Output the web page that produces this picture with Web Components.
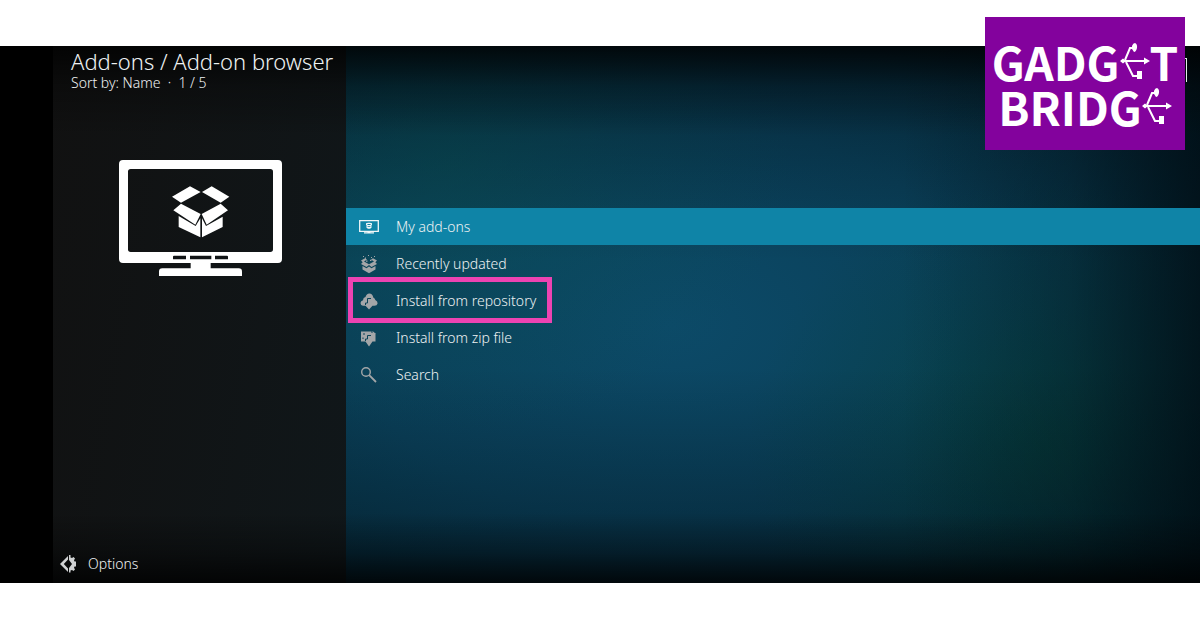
<!DOCTYPE html>
<html lang="en">
<head>
<meta charset="utf-8">
<title>Add-on browser</title>
<style>
body { margin: 0; background: #fff; font-family: "Noto Sans", "Open Sans", sans-serif; font-weight: 300; color: #eef2f3; }
</style>
</head>
<body>
<addon-browser></addon-browser>
<script>
const define = (name, html) => {
  const template = document.createElement('template');
  template.innerHTML = html;
  customElements.define(name, class extends HTMLElement {
    constructor() {
      super();
      this.attachShadow({ mode: 'open' }).append(template.content.cloneNode(true));
    }
  });
};

const BOX = `
  <path d="M186 140 240 109 272 126 213 158ZM276 126 305 109 358 140 332 158ZM213 161 272 192 256 224 190 181ZM332 161 354 181 290 224 275 192ZM206 198 257 228 271 205V262L206 231ZM276 205 288 228 338 200V231L276 262Z"/>`;

const ICONS = {
  tv: `<path fill="none" stroke="currentColor" stroke-width="1.3" d="M.7 3.7H19.3V14.3H.7Z"/><path d="M8.5 14H11.5V15.2H15V16.4H5V15.2H8.5Z"/><path fill-rule="evenodd" d="M7 6.3 9 5.8H11L13 6.3V7.8L12.5 8.2V10.7L11 11.8H9L7.5 10.7V8.2L7 7.8ZM8.4 7.1V8H11.6V7.1ZM8.600 9V9.700H11.400V9Z"/>`,
  box: `<path d="M4 2h1v1H4ZM6 3.5h1v1H6ZM9 1h1v1H9ZM12 3h1v1H12ZM15 2h1v1H15ZM2 6.5 6 4.3 8 5.5 5 7.5 10 10.3 15 7.5 12 5.5 14 4.3 18 6.5 16.3 8.2 18 10 12.5 13 10 11 7.5 13 2 10 3.7 8.2ZM3.5 12 7.5 14.3 10 12.6 12.5 14.3 16.5 12V15.5L10 19.3 3.5 15.5Z"/><path d="M7 6.6h1.5v1.2H7ZM11 5.8h1.5V7H11Z"/>`,
  cloud: `<path d="M6.500 6Q7.500 2.500 10.300 2.500 13.500 2.500 14.300 6.500 16.300 7.500 16.300 9 18.800 10 18.600 12.500 18 14.800 15.500 14.800H13.500L10 18.500 6.500 14.800H4Q1.500 14.500 1.500 12 1.700 9.800 4 9.300 4 6.500 6.500 6Z"/><path fill="none" stroke="#0b4357" d="M6.500 14V12H8.500V7.500H12"/>`,
  zip: `<path d="M2 3.500H12.500V5H16.500V13.500H13.500L10 18.500 6.500 13.500H2Z"/><path d="M13.500 3 16.500 5.500H13.500Z"/><path fill="none" stroke="#0b4357" d="M4 11V9.500M6.500 13V11H8.500V7.500H12M4 6H6"/>`,
  search: `<circle cx="7" cy="7" r="4.300" fill="none" stroke="currentColor" stroke-width="1.400"/><path fill="none" stroke="currentColor" stroke-width="1.800" d="M10.200 10.200 17 17"/>`,
  options: `<path d="M8 2V5.500L3.800 10 8 14.500V18L0 10Z"/><path d="M9 1H10.500V3.500L12 4 13.500 3 15 4.500 14 6.300 14.500 7.500H16V12.500H14.500L14 13.700 15 15.500 13.500 17 12 16 10.500 16.500V18.500H9V14L12 10 9 6Z"/>`
};

customElements.define('ui-icon', class extends HTMLElement {
  constructor() {
    super();
    this.attachShadow({ mode: 'open' });
  }
  connectedCallback() {
    this.shadowRoot.innerHTML = `<style>:host{display:block;flex:none;width:20px;height:20px}svg{display:block}</style>
      <svg width="20" height="20" viewBox="0 0 20 20" fill="currentColor" aria-hidden="true">${ICONS[this.getAttribute('name')]}</svg>`;
  }
});

define('menu-item', `
  <style>
    :host { display: block; --icon: #a3a6a8; }
    :host([selected]) { background: #0f84a7; --icon: #f0f6f8; }
    button { display: flex; align-items: center; width: 100%; height: 37px; padding: 0 13px; border: 0; background: none; color: inherit; font: inherit; font-size: 14px; font-weight: 350; line-height: 20px; text-align: left; }
    .content { position: relative; display: flex; align-items: center; gap: 17px; }
    ::slotted(ui-icon) { color: var(--icon); }
    :host([marked]) .content::after { content: ""; position: absolute; inset: -14px -16px -12px -11px; border: 5px solid #ec43b2; }
  </style>
  <button type="button"><span class="content"><slot name="icon"></slot><slot></slot></span></button>`);

define('addon-art', `
  <style>:host { display: block; } svg { display: block; margin: 0 auto; }</style>
  <svg width="163" height="116" viewBox="27 30 489 348" fill="#fff" role="img" aria-label="Add-ons">
    <path fill-rule="evenodd" d="M39 30H504Q516 30 516 42V327Q516 339 504 339H302V355H386Q396 355 396 365V378H147V365Q147 355 157 355H242V339H39Q27 339 27 327V42Q27 30 39 30ZM62 57Q54 57 54 65V298Q54 306 62 306H481Q489 306 489 298V65Q489 57 481 57ZM192 317Q189 317 189 320V328H228V317ZM240 317V328H304V317ZM315 317V328H354V320Q354 317 351 317Z"/>
    ${BOX}
  </svg>`);

define('side-panel', `
  <style>
    :host { display: flex; flex-direction: column; background: var(--shade), linear-gradient(100deg, #111111, #10171a); }
    header { padding: 2px 0 0 18px; white-space: nowrap; }
    h1 { margin: 0; font-size: 22px; line-height: 26px; font-weight: 300; }
    p { margin: 0; font-size: 14px; font-weight: 350; line-height: 18px; white-space: pre; }
    addon-art { margin: 68px 0 auto 2px; }
    button { display: flex; align-items: center; align-self: start; gap: 8px; padding: 0; margin: 0 0 9px 7px; border: 0; background: none; color: inherit; font: inherit; font-size: 14px; font-weight: 350; line-height: 20px; }
    ui-icon { color: #d0d2d3; }
  </style>
  <header><h1>Add-ons / Add-on browser</h1><p>Sort by: Name  ·  1 / 5</p></header>
  <addon-art></addon-art>
  <button type="button"><ui-icon name="options"></ui-icon>Options</button>`);

const USB = `<svg width="30" height="37" viewBox="0 0 30 37" fill="#fff" stroke="#fff" aria-hidden="true">
  <path fill="none" stroke-width="2" d="M1 18H26M5 17 10 5H14M6 19 13 33H18"/>
  <path stroke="none" d="M24 14.500 30 18 24 21.500ZM12 3Q13 0 15 0 17.500 1 17 5 16 9 14 9L12 6ZM17 28H22V36H17ZM0 18 3 15.500 6 18 3 20.500Z"/></svg>`;

define('brand-logo', `
  <style>
    :host { display: flex; flex-direction: column; align-items: center; justify-content: center; gap: 8px; box-sizing: border-box; width: 200px; height: 133px; background: #83029d; color: #fff; font-family: "Noto Sans CJK SC", "Liberation Sans", sans-serif; font-weight: 700; font-size: 46px; line-height: 37px; }
    div { display: flex; align-items: center; }
    svg { display: block; }
  </style>
  <div><span>GADG</span>${USB}<span>T</span></div>
  <div><span>BRIDG</span>${USB}</div>`);

define('addon-browser', `
  <style>
    :host { display: flex; flex-direction: column; position: relative; box-sizing: border-box; min-height: 100vh; padding: 46px 0 45px; --shade: linear-gradient(rgba(0,0,0,.8), rgba(0,0,0,.3) 40px, transparent 90px, transparent calc(100% - 70px), rgba(0,0,0,.35) calc(100% - 30px), rgba(0,0,0,.8)); }
    main { flex: 1; display: grid; grid-template-columns: 293px 1fr; padding-left: 53px; background: #000; }
    nav { padding-top: 162px; background: var(--shade),
      linear-gradient(90deg, rgba(0,10,16,0) 65%, rgba(0,10,16,.3) 85%, rgba(0,10,16,.75)),
      linear-gradient(rgba(0,10,20,.4), rgba(0,10,20,0) 40%, rgba(0,10,20,0) 60%, rgba(0,10,20,.4)),
      radial-gradient(ellipse 35% 50% at 82% 75%, rgba(5,68,60,.7), rgba(5,68,60,.3) 50%, rgba(5,68,60,0)),
      radial-gradient(ellipse 40% 50% at 12% 22%, rgba(10,80,85,.6), rgba(10,80,85,.25) 50%, rgba(10,80,85,0)),
      radial-gradient(ellipse 75% 75% at 38% 52%, #0c4a68, #0a4059 50%, #06303f); }
    .clock { position: absolute; top: 58px; right: 13px; width: 4px; height: 24px; box-sizing: border-box; border: solid #e5eaec; border-width: 1px 1px 0 0; }
    brand-logo { position: absolute; top: 17px; right: 15px; }
  </style>
  <main>
    <side-panel></side-panel>
    <nav aria-label="Add-on browser">
      <menu-item selected><ui-icon slot="icon" name="tv"></ui-icon>My add-ons</menu-item>
      <menu-item><ui-icon slot="icon" name="box"></ui-icon>Recently updated</menu-item>
      <menu-item marked><ui-icon slot="icon" name="cloud"></ui-icon>Install from repository</menu-item>
      <menu-item><ui-icon slot="icon" name="zip"></ui-icon>Install from zip file</menu-item>
      <menu-item><ui-icon slot="icon" name="search"></ui-icon>Search</menu-item>
    </nav>
  </main>
  <span class="clock"></span>
  <brand-logo></brand-logo>`);
</script>
</body>
</html>
